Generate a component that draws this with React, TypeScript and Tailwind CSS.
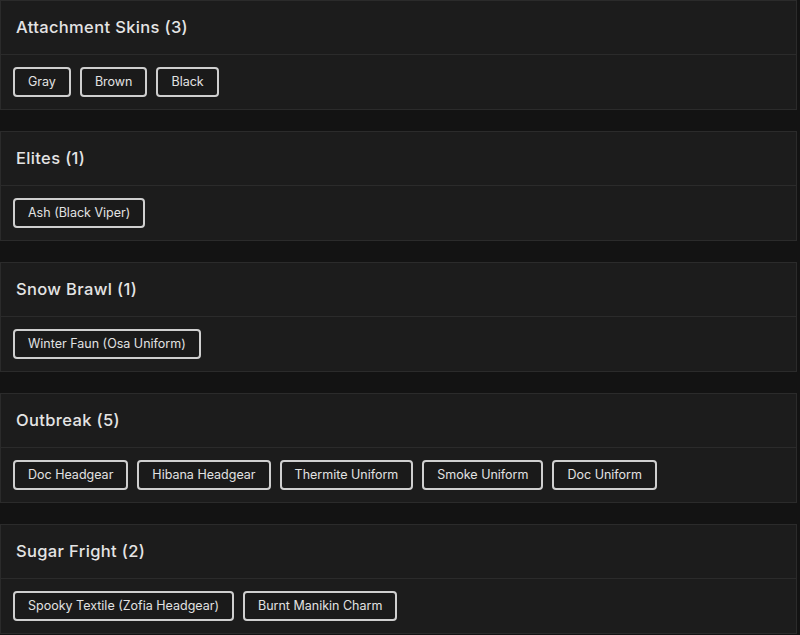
import React from 'react';

const SECTIONS: { title: string; items: string[] }[] = [
  { title: 'Attachment Skins (3)', items: ['Gray', 'Brown', 'Black'] },
  { title: 'Elites (1)', items: ['Ash (Black Viper)'] },
  { title: 'Snow Brawl (1)', items: ['Winter Faun (Osa Uniform)'] },
  {
    title: 'Outbreak (5)',
    items: ['Doc Headgear', 'Hibana Headgear', 'Thermite Uniform', 'Smoke Uniform', 'Doc Uniform'],
  },
  { title: 'Sugar Fright (2)', items: ['Spooky Textile (Zofia Headgear)', 'Burnt Manikin Charm'] },
];

function Section({ title, items }: { title: string; items: string[] }) {
  return (
    <div className="bg-[#1c1c1c] border border-[#2b2b2b] h-[110px] flex flex-col">
      {/* Header */}
      <div className="h-[54px] flex items-center px-[15px] border-b border-[#2b2b2b]">
        <h2 className="text-[16.5px] font-medium text-[#e4e4e4] tracking-[0.35px]">{title}</h2>
      </div>
      {/* Chips */}
      <div className="flex-1 flex items-center gap-[9px] px-[12px]">
        {items.map(item => (
          <button
            key={item}
            className="h-[30px] px-[13px] border-2 border-[#cfcfcf] rounded-[4px] text-[12.5px] text-[#e2e2e2] bg-[#1a1a1a] whitespace-nowrap"
          >
            {item}
          </button>
        ))}
      </div>
    </div>
  );
}

export default function App() {
  return (
    <div
      className="w-[800px] h-[635px] bg-[#131313] overflow-hidden flex flex-col gap-[21px] pr-[3px]"
      style={{ fontFamily: 'Inter, "Open Sans", sans-serif' }}
    >
      {SECTIONS.map(s => (
        <Section key={s.title} title={s.title} items={s.items} />
      ))}
    </div>
  );
}
